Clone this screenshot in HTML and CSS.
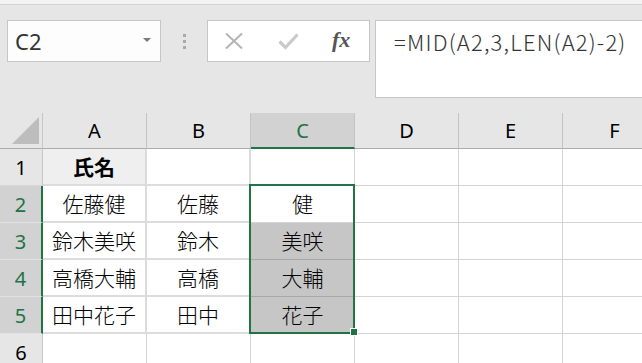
FILE: index.html
```html
<!DOCTYPE html>
<html lang="ja">

<head>
    <meta charset="UTF-8">
    <meta name="viewport" content="width=device-width, initial-scale=1.0">
    <title>MID関数</title>
    <link rel="stylesheet" href="styles.css">
</head>

<body>
    <div class="top-strip"></div>
    <div class="formula-bar">
        <div class="name-box">
            <span>C2</span>
            <span class="arrow"></span>
        </div>
        <div class="grip">
            <span></span><span></span><span></span>
        </div>
        <div class="buttons">
            <svg class="btn-icon" width="18" height="16" viewBox="0 0 18 16">
                <path d="M1 0.5 L17 15.5 M17 0.5 L1 15.5" stroke="#b4b4b4" stroke-width="2" fill="none" />
            </svg>
            <svg class="btn-icon" width="21" height="17" viewBox="0 0 21 17">
                <path d="M1.5 8.5 L7.5 14.5 L19.5 1.5" stroke="#cacaca" stroke-width="3.2" fill="none" />
            </svg>
            <span class="fx">fx</span>
        </div>
        <div class="formula">=MID(A2,3,LEN(A2)-2)</div>
    </div>

    <div class="sheet">
        <div class="corner"><span class="tri"></span></div>
        <div class="colh">A</div>
        <div class="colh">B</div>
        <div class="colh active">C</div>
        <div class="colh">D</div>
        <div class="colh">E</div>
        <div class="colh">F</div>

        <div class="rowh">1</div>
        <div class="cell name head">氏名</div>
        <div class="cell name"></div>
        <div class="cell"></div>
        <div class="cell"></div>
        <div class="cell"></div>
        <div class="cell"></div>

        <div class="rowh active">2</div>
        <div class="cell name">佐藤健</div>
        <div class="cell name">佐藤</div>
        <div class="cell">健</div>
        <div class="cell"></div>
        <div class="cell"></div>
        <div class="cell"></div>

        <div class="rowh active">3</div>
        <div class="cell name">鈴木美咲</div>
        <div class="cell name">鈴木</div>
        <div class="cell picked">美咲</div>
        <div class="cell"></div>
        <div class="cell"></div>
        <div class="cell"></div>

        <div class="rowh active">4</div>
        <div class="cell name">高橋大輔</div>
        <div class="cell name">高橋</div>
        <div class="cell picked">大輔</div>
        <div class="cell"></div>
        <div class="cell"></div>
        <div class="cell"></div>

        <div class="rowh active">5</div>
        <div class="cell name">田中花子</div>
        <div class="cell name">田中</div>
        <div class="cell picked last">花子</div>
        <div class="cell"></div>
        <div class="cell"></div>
        <div class="cell"></div>

        <div class="rowh">6</div>
        <div class="cell"></div>
        <div class="cell"></div>
        <div class="cell"></div>
        <div class="cell"></div>
        <div class="cell"></div>
        <div class="cell"></div>

        <div class="selection"></div>
        <div class="handle"></div>
    </div>
</body>

</html>
```

FILE: styles.css
```css
body {
    margin: 0;
    width: 642px;
    height: 363px;
    overflow: hidden;
    background-color: #e6e6e6;
    font-family: "Noto Sans CJK JP", "Noto Sans", sans-serif;
    color: #000;
}

.top-strip {
    height: 4px;
    background-color: #f3f3f3;
    border-bottom: 1px solid #d4d4d4;
}

.formula-bar {
    display: flex;
    align-items: flex-start;
    padding: 15px 0 15px 7px;
}

.name-box {
    box-sizing: border-box;
    width: 154px;
    height: 42px;
    border: 1px solid #c6c6c6;
    background-color: #fdfdfd;
    display: flex;
    align-items: center;
    justify-content: space-between;
    padding: 0 9px 0 7px;
    font-family: "Noto Sans", sans-serif;
    font-size: 22px;
    color: #333;
}

.arrow {
    width: 0;
    height: 0;
    border-left: 4px solid transparent;
    border-right: 4px solid transparent;
    border-top: 4px solid #7a7a7a;
    margin-top: -2px;
}

.grip {
    width: 46px;
    height: 42px;
    display: flex;
    flex-direction: column;
    align-items: center;
    justify-content: center;
    gap: 3px;
}

.grip span {
    width: 3px;
    height: 3px;
    background-color: #a9a9a9;
}

.buttons {
    box-sizing: border-box;
    width: 163px;
    height: 42px;
    border: 1px solid #c6c6c6;
    background-color: #fff;
    display: flex;
    align-items: center;
    padding-left: 17px;
}

.btn-icon:first-child {
    margin-right: 35px;
}

.fx {
    margin-left: 33px;
    font-family: "Liberation Serif", serif;
    font-style: italic;
    font-weight: bold;
    font-size: 22px;
    color: #555;
    margin-top: -3px;
}

.formula {
    box-sizing: border-box;
    flex: 1;
    height: 78px;
    margin-left: 5px;
    margin-right: -2px;
    border: 1px solid #c6c6c6;
    background-color: #fff;
    padding: 4px 0 0 18px;
    font-size: 22px;
    font-weight: 300;
    letter-spacing: 1.2px;
    color: #333;
}

.sheet {
    position: relative;
    display: grid;
    grid-template-columns: 43px repeat(6, 104px);
    grid-template-rows: 36px repeat(6, 37px);
}

.corner,
.colh,
.rowh,
.cell {
    box-sizing: border-box;
    display: flex;
    align-items: center;
    justify-content: center;
}

.corner {
    border-right: 1px solid #c6c6c6;
    border-bottom: 1px solid #ababab;
    align-items: flex-end;
    justify-content: flex-end;
    padding: 0 3px 4px 0;
}

.tri {
    width: 0;
    height: 0;
    border-left: 27px solid transparent;
    border-bottom: 27px solid #bdbdbd;
}

.colh {
    border-right: 1px solid #c3c3c3;
    border-bottom: 1px solid #ababab;
    font-family: "Noto Sans", sans-serif;
    font-size: 20px;
}

.colh.active {
    background-color: #d2d2d2;
    border-bottom: 2px solid #217346;
    color: #217346;
    padding-top: 1px;
}

.rowh {
    border-right: 1px solid #c6c6c6;
    border-bottom: 1px solid #d6d6d6;
    font-family: "Noto Sans", sans-serif;
    font-size: 20px;
}

.rowh.active {
    background-color: #d2d2d2;
    border-right: 2px solid #217346;
    border-bottom-color: #e2e2e2;
    color: #217346;
}

.cell {
    background-color: #fff;
    border-right: 1px solid #d4d4d4;
    border-bottom: 1px solid #d4d4d4;
    font-size: 21px;
    font-weight: 300;
    padding-bottom: 2px;
}

.cell.name {
    border-right: 2px solid #dcdcdc;
    border-bottom: 2px solid #dcdcdc;
}

.cell.head {
    background-color: #efefef;
    font-weight: bold;
}

.cell.picked {
    background-color: #c6c6c6;
    border-bottom-color: #a8a8a8;
}

.cell.picked.last {
    border-bottom-color: #d4d4d4;
}

.selection {
    position: absolute;
    left: 249px;
    top: 71px;
    width: 106px;
    height: 150px;
    box-sizing: border-box;
    border: 2px solid #217346;
}

.handle {
    position: absolute;
    left: 350px;
    top: 215px;
    width: 6px;
    height: 6px;
    background-color: #217346;
    border: 1px solid #fff;
}
```
